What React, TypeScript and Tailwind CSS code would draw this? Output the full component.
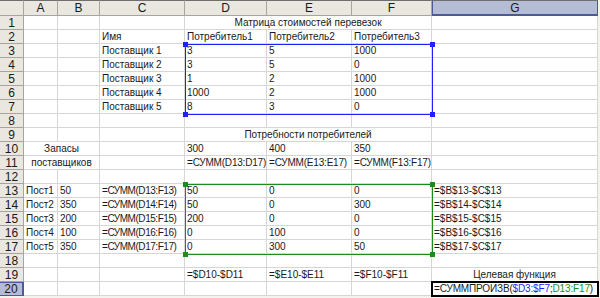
import React from "react";

type Cell = {
  text: React.ReactNode;
  span?: number;
  center?: boolean;
  size?: string;
};

const COLS = ["A", "B", "C", "D", "E", "F", "G"];

const cells: Record<string, Cell> = {
  "1D": { text: "Матрица стоимостей перевезок", span: 3, center: true },
  "2C": { text: "Имя" },
  "2D": { text: "Потребитель1" },
  "2E": { text: "Потребитель2" },
  "2F": { text: "Потребитель3" },
  "3C": { text: "Поставщик 1" },
  "3D": { text: "3" },
  "3E": { text: "5" },
  "3F": { text: "1000" },
  "4C": { text: "Поставщик 2" },
  "4D": { text: "3" },
  "4E": { text: "5" },
  "4F": { text: "0" },
  "5C": { text: "Поставщик 3" },
  "5D": { text: "1" },
  "5E": { text: "2" },
  "5F": { text: "1000" },
  "6C": { text: "Поставщик 4" },
  "6D": { text: "1000" },
  "6E": { text: "2" },
  "6F": { text: "1000" },
  "7C": { text: "Поставщик 5" },
  "7D": { text: "8" },
  "7E": { text: "3" },
  "7F": { text: "0" },
  "9D": { text: "Потребности потребителей", span: 3, center: true },
  "10A": { text: "Запасы", span: 2, center: true },
  "10D": { text: "300" },
  "10E": { text: "400" },
  "10F": { text: "350" },
  "11A": { text: "поставщиков", span: 2, center: true },
  "11D": { text: "=СУММ(D13:D17)", size: "text-[10px] tracking-[-0.2px]" },
  "11E": { text: "=СУММ(E13:E17)", size: "text-[10px] tracking-[-0.2px]" },
  "11F": { text: "=СУММ(F13:F17)", size: "text-[10px] tracking-[-0.2px]" },
  "19D": { text: "=$D10-$D11" },
  "19E": { text: "=$E10-$E11" },
  "19F": { text: "=$F10-$F11" },
  "19G": { text: "Целевая функция", center: true },
  "20G": {
    size: "text-[10px] tracking-[-0.15px]",
    text: (
      <>
        =СУММПРОИЗВ(<span className="text-[#1f1fff]">$D3:$F7</span>;
        <span className="text-[#1c8c1c]">D13:F17</span>)
      </>
    ),
  },
};

const shipments = [
  ["50", "50", "0", "0"],
  ["350", "50", "0", "300"],
  ["200", "200", "0", "0"],
  ["100", "0", "100", "0"],
  ["350", "0", "300", "50"],
];

shipments.forEach(([stock, d, e, f], i) => {
  const r = 13 + i;
  cells[`${r}A`] = { text: `Пост${i + 1}` };
  cells[`${r}B`] = { text: stock };
  cells[`${r}C`] = { text: `=СУММ(D${r}:F${r})`, size: "text-[10px] tracking-[-0.45px]" };
  cells[`${r}D`] = { text: d };
  cells[`${r}E`] = { text: e };
  cells[`${r}F`] = { text: f };
  cells[`${r}G`] = { text: `=$B$${r}-$C$${r}` };
});

const spanClass: Record<number, string> = {
  1: "",
  2: "col-span-2",
  3: "col-span-3",
};

const Handle: React.FC<{ className: string }> = ({ className }) => (
  <div className={`absolute w-[5px] h-[5px] ${className}`} />
);

const RangeBox: React.FC<{ className: string; color: string; handle: string }> = ({
  className,
  color,
  handle,
}) => (
  <div className={`absolute pointer-events-none border ${color} ${className}`}>
    <Handle className={`-left-[3px] -top-[3px] ${handle}`} />
    <Handle className={`-right-[3px] -top-[3px] ${handle}`} />
    <Handle className={`-left-[3px] -bottom-[3px] ${handle}`} />
    <Handle className={`-right-[3px] -bottom-[3px] ${handle}`} />
  </div>
);

export default function App() {
  const rows = Array.from({ length: 20 }, (_, i) => i + 1);

  return (
    <div
      className="relative w-[600px] h-[298px] overflow-hidden bg-[#f4f3ee] text-[#1a1a1a]"
      style={{ fontFamily: '"Liberation Sans", Arial, sans-serif' }}
    >
      <div className="grid grid-cols-[24px_34px_42px_85px_82px_85px_80px_166px] grid-rows-[16px_repeat(20,14px)] w-[598px] bg-white">
        <div className="bg-[#e9e7e0] border-t border-t-[#6f6f6f] border-r border-b border-[#a6a49c]" />
        {COLS.map((c) => (
          <div
            key={c}
            className={
              c === "G"
                ? "flex items-center justify-center text-[12px] bg-[#b4bcd6] border-t border-t-[#6f6f6f] border-x border-b-2 border-[#4a5a9a]"
                : "flex items-center justify-center text-[12px] bg-[#e9e7e0] border-t border-t-[#6f6f6f] border-r border-b border-[#a6a49c]"
            }
          >
            {c}
          </div>
        ))}

        {rows.map((r) => {
          const out: React.ReactNode[] = [];
          out.push(
            <div
              key={`h${r}`}
              className={
                r === 20
                  ? "flex items-center justify-center text-[12px] bg-[#b4bcd6] border-r-2 border-y border-[#4a5a9a]"
                  : "flex items-center justify-center text-[12px] bg-[#e9e7e0] border-r border-b border-[#a6a49c]"
              }
            >
              {r}
            </div>
          );
          let skip = 0;
          COLS.forEach((c) => {
            if (skip > 0) {
              skip--;
              return;
            }
            const cell = cells[`${r}${c}`];
            const span = cell?.span ?? 1;
            skip = span - 1;
            out.push(
              <div
                key={`${r}${c}`}
                className={`flex items-center pt-[1px] px-[2px] leading-none whitespace-nowrap border-r border-b border-[#d6d6d6] ${
                  spanClass[span]
                } ${cell?.center ? "justify-center" : ""} ${cell?.size ?? "text-[10px]"}`}
              >
                {cell?.text}
              </div>
            );
          });
          return out;
        })}
      </div>

      <RangeBox
        className="left-[185px] top-[44px] w-[248px] h-[71px]"
        color="border-[#1f1fff]"
        handle="bg-[#1f1fff]"
      />
      <RangeBox
        className="left-[185px] top-[184px] w-[248px] h-[71px]"
        color="border-[#1c8c1c]"
        handle="bg-[#1c8c1c]"
      />
      <div className="absolute left-[431px] top-[281px] w-[168px] h-[16px] border-2 border-black pointer-events-none" />
    </div>
  );
}
